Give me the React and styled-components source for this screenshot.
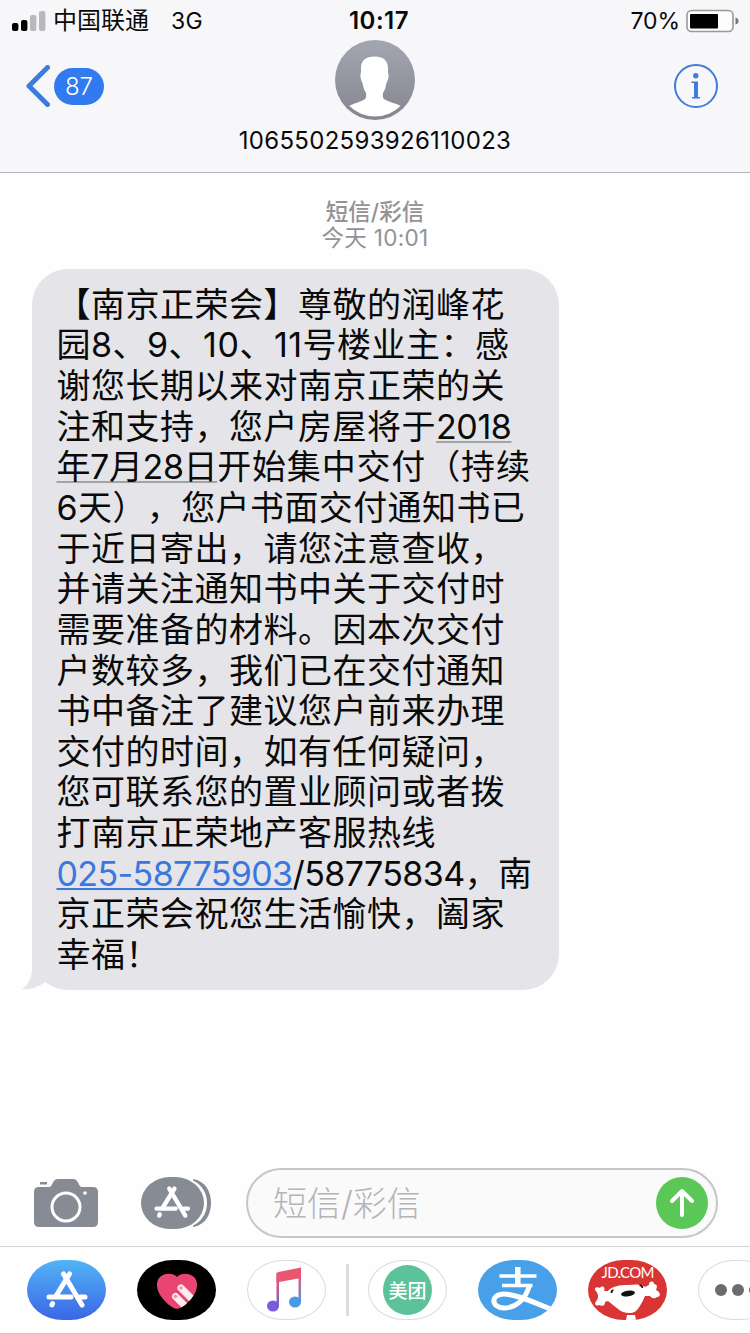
import React from "react";
import styled, { createGlobalStyle } from "styled-components";

const GlobalStyle = createGlobalStyle`
* {
  box-sizing: border-box;
}
body {
  margin: 0;
  background: #fff;
  font-family: Inter, "Noto Sans CJK SC", sans-serif;
  text-spacing-trim: space-all;
}
`
const Screen = styled.div`
display: flex;
flex-direction: column;
width: 750px;
height: 1334px;
overflow: hidden;
background: #fefefe;
`
const Header = styled.header`
height: 173px;
background: #f7f7f9;
border-bottom: 1px solid #b2b2b5;
`
const StatusBar = styled.div`
display: grid;
grid-template-columns: 1fr auto 1fr;
align-items: center;
height: 40px;
padding: 1px 11px 0 12px;
font-size: 23px;
color: #0a0a0a;
`
const StatusSide = styled.div`
display: flex;
align-items: center;
justify-content: ${(props) => (props.$end ? "flex-end" : "flex-start")};
`
const Carrier = styled.span`
margin-left: 7px;
padding-top: 1px;
font-size: 24px;
line-height: 30px;
`
const Network = styled.span`
margin-left: 22px;
letter-spacing: 0.3px;
`
const Clock = styled.span`
margin-left: 7px;
font-size: 24px;
font-weight: 600;
letter-spacing: 0.5px;
`
const Percent = styled.span`
margin-right: 6px;
letter-spacing: -0.1px;
`
const NavBar = styled.div`
display: grid;
grid-template-columns: 1fr auto 1fr;
`
const Back = styled.div`
display: flex;
align-items: center;
height: 42px;
margin: 25px 0 0 25px;
`
const Badge = styled.span`
display: flex;
align-items: center;
justify-content: center;
width: 50px;
height: 37px;
margin-left: 4px;
border-radius: 19px;
background: #327af0;
color: #fff;
font-size: 24px;
font-weight: 300;
`
const Contact = styled.div`
display: flex;
flex-direction: column;
align-items: center;
`
const Number = styled.span`
margin-top: 6px;
font-size: 24px;
line-height: 30px;
letter-spacing: 0.3px;
color: #0a0a0a;
`
const Info = styled.div`
justify-self: end;
margin: 24px 32px 0 0;
`
const Thread = styled.main`
flex: 1;
padding-top: 26px;
`
const Meta = styled.div`
display: flex;
flex-direction: column;
align-items: center;
font-size: 22.5px;
line-height: 26px;
color: #929297;
`
const MetaKind = styled.span`
font-weight: 500;
`
const MetaTime = styled.span`
letter-spacing: 0.3px;
`
const Bubble = styled.div`
position: relative;
width: 527px;
height: 721px;
margin: 18px 0 0 32px;
padding: 15.8px 0 0 24.5px;
border-radius: 36px;
background: #e5e4e8;
`
const Tail = styled.svg`
position: absolute;
left: -11px;
bottom: 0;
`
const Line = styled.div`
height: 40.65px;
font-size: 34px;
line-height: 40.65px;
letter-spacing: ${(props) => props.$spacing || 0.5}px;
white-space: nowrap;
color: #0a0a0a;
`
const DateMark = styled.span`
letter-spacing: -0.4px;
text-decoration: underline;
text-decoration-color: #a3a3a6;
text-decoration-thickness: 2px;
text-decoration-skip-ink: none;
text-underline-offset: 2px;
`
const Phone = styled.a`
color: #3a78e0;
text-decoration: underline;
text-decoration-thickness: 2px;
text-decoration-skip-ink: none;
text-underline-offset: 2px;
`
const Composer = styled.div`
display: flex;
align-items: center;
height: 78px;
padding: 0 32px 8px 33px;
`
const AppsButton = styled.div`
display: flex;
margin: 0 35px 0 42px;
`
const Field = styled.div`
display: flex;
align-items: center;
justify-content: space-between;
flex: 1;
height: 70px;
padding: 0 8px 0 25px;
border: 2px solid #c5c5ca;
border-radius: 35px;
background: #fafafb;
`
const Placeholder = styled.span`
padding-top: 2px;
font-size: 34px;
font-weight: 300;
line-height: 40px;
color: #b4b4b9;
`
const Strip = styled.div`
display: flex;
height: 88px;
padding: 13px 0 0 27px;
border-top: 1px solid #d2d1d8;
border-bottom: 1px solid #c9c9ce;
`
const AppTile = styled.div`
display: flex;
flex-shrink: 0;
align-items: center;
justify-content: center;
width: 79px;
height: 60px;
margin-right: 31px;
overflow: hidden;
border: ${(props) => (props.$plain ? "1px solid #dcdce0" : "none")};
border-radius: 36px / 30px;
background: ${(props) => props.$bg || "#fff"};

svg {
  flex-shrink: 0;
}
`
const Separator = styled.div`
flex-shrink: 0;
width: 3px;
height: 52px;
margin: 4px 19px 0 -11px;
background: #dcdce0;
`
const Meituan = styled.div`
display: flex;
align-items: center;
justify-content: center;
width: 49px;
height: 50px;
padding-top: 3px;
border-radius: 50%;
background: #5cc29a;
color: #fff;
font-size: 19px;
font-weight: 500;
line-height: 20px;
`

const bars = [
    { height: 8, color: "#000" },
    { height: 11, color: "#000" },
    { height: 16, color: "#b9b9bb" },
    { height: 20, color: "#b9b9bb" },
]

function Signal(){
    return(
        <svg width="34" height="20">
            {bars.map((bar, i) => (
                <rect key={i} x={i * 9} y={20 - bar.height} width="6.4" height={bar.height} rx="2" fill={bar.color}/>
            ))}
        </svg>
    )
}

function Battery(){
    return(
        <svg width="53" height="24" viewBox="0 0 53 24">
            <rect x="1" y="1.5" width="46" height="21" rx="4.5" fill="#fdfdfd" stroke="#98989b" strokeWidth="1.6"/>
            <rect x="4" y="5" width="28" height="14.5" rx="1" fill="#000"/>
            <path d="M49.5 8.5Q52.5 9.5 52.5 12T49.5 15.5Z" fill="#77777a"/>
        </svg>
    )
}

function Avatar(){
    return(
        <svg width="80" height="80" viewBox="0 0 80 80">
            <defs>
                <linearGradient id="avatar" x1="0" y1="0" x2="0" y2="1">
                    <stop offset="0" stopColor="#a3a6b2"/>
                    <stop offset="1" stopColor="#85868e"/>
                </linearGradient>
                <clipPath id="face">
                    <circle cx="40" cy="40" r="36.5"/>
                </clipPath>
            </defs>
            <circle cx="40" cy="40" r="40" fill="url(#avatar)"/>
            <path clipPath="url(#face)" fill="#fff" d="M39.500 16.500C30 16.500 25.500 21 26 30C26.200 33 25.200 34 25.500 37C26 41 27.500 42 28 45C28.500 49 30 51 31 53C31.500 56 31 58 30 59C26 62 19 63 12 67V80H68V67C61 63 53 62 49 59C48 58 47.500 56 48 53C49 51 50.500 49 51 45C51.500 42 53 41 53.500 37C53.800 34 52.800 33 53 30C53.500 21 49 16.500 39.500 16.500Z"/>
        </svg>
    )
}

function InfoIcon(){
    return(
        <svg width="44" height="44" viewBox="0 0 44 44" fill="#3f7bdc">
            <circle cx="22" cy="22" r="21" fill="none" stroke="#3f7bdc" strokeWidth="2"/>
            <circle cx="21.800" cy="11.800" r="2.700"/>
            <path d="M17.500 17.500H24V33H26V34.500H18V33H20V19H17.500Z"/>
        </svg>
    )
}

function Camera(){
    return(
        <svg width="66" height="50" viewBox="0 0 66 50">
            <rect x="7" y="4" width="7" height="2.500" fill="#878b94"/>
            <path fill="#878b94" d="M6 9H16C20 9 19 1 25 1H40C46 1 45 9 49 9H60Q65 9 65 14V44Q65 49 60 49H6Q1 49 1 44V14Q1 9 6 9Z"/>
            <circle cx="33" cy="29" r="14" fill="none" stroke="#fff" strokeWidth="3"/>
            <circle cx="52" cy="15" r="1.800" fill="#fff"/>
        </svg>
    )
}

function StoreMark(){
    return(
        <g fill="none" stroke="#fff" strokeWidth="5" strokeLinecap="round">
            <path d="M23.500 3L10 25M17.500 3L36 34"/>
            <path d="M3 26H25M34 26H39"/>
            <path d="M6.500 32.500L6 34"/>
        </g>
    )
}

function AppsIcon(){
    return(
        <svg width="70" height="52" viewBox="0 0 70 52">
            <path fill="#878b94" d="M52 2C64 4 70 14 70 26S64 48 52 50Z"/>
            <path fill="#fefefe" d="M38 0C56 1 66 12 66 26S56 51 38 52Z"/>
            <rect width="63" height="52" rx="29" ry="26" fill="#878b94"/>
            <g transform="translate(13 9) scale(.87)"><StoreMark/></g>
        </svg>
    )
}

function Music(){
    return(
        <svg width="79" height="60" viewBox="0 0 79 60">
            <defs>
                <linearGradient id="stem" x1="0" y1="0" x2="0" y2="1">
                    <stop offset="0.2" stopColor="#ea5673"/>
                    <stop offset="1" stopColor="#6c63df"/>
                </linearGradient>
                <linearGradient id="stem2" x1="0" y1="0" x2="0" y2="1">
                    <stop offset="0.2" stopColor="#ea5673"/>
                    <stop offset="1" stopColor="#4b98e4"/>
                </linearGradient>
            </defs>
            <path d="M29.500 13H32V46H29.500Z" fill="url(#stem)"/>
            <path d="M51.500 8H54V42H51.500Z" fill="url(#stem2)"/>
            <path d="M29.500 14Q29.500 12.500 31.500 12L54 7.500V18L29.500 22.500Z" fill="#e9566f"/>
            <ellipse cx="26" cy="46" rx="6" ry="5.500" fill="#7a5be0"/>
            <ellipse cx="48" cy="42" rx="6" ry="5.500" fill="#4799e4"/>
        </svg>
    )
}

function Heart(){
    return(
        <svg width="42" height="38" viewBox="0 0 42 38">
            <defs>
                <clipPath id="heart">
                    <path d="M21 6C17 1 7 2 3 7C-1 13 1 21 7 28Q14 36 19 37.500Q21 38 23 37.500Q28 36 35 28C41 21 43 13 39 7C35 2 25 1 21 6Z"/>
                </clipPath>
            </defs>
            <g clipPath="url(#heart)">
                <rect width="42" height="38" fill="#ea4570"/>
                <g stroke="#f8edf1" strokeWidth="7" strokeLinecap="round">
                    <path d="M25 17L42 34"/>
                    <path d="M19.500 25.500L34 40"/>
                </g>
                <circle cx="25" cy="17" r="1.800" fill="#f091ab"/>
                <circle cx="19.500" cy="25.500" r="1.800" fill="#f091ab"/>
            </g>
        </svg>
    )
}

function Alipay(){
    return(
        <svg width="79" height="60" viewBox="0 0 79 60" fill="none" stroke="#fff">
            <path strokeWidth="3.500" d="M21.500 16H58.500M24 25.500H54.500"/>
            <path strokeWidth="5.500" d="M39.800 7V26"/>
            <path strokeWidth="5" d="M51.500 25C48 39 38 48 26 48C13 48 12 34 26 34C38 34 57 43 78 51"/>
        </svg>
    )
}

function JdDog(){
    return(
        <svg width="79" height="60" viewBox="0 0 79 60">
            <text x="40" y="17.500" textAnchor="middle" textLength="53" fontFamily="Lato, sans-serif" fontSize="15" fill="#fff">JD.COM</text>
            <path fill="#fff" d="M20 31C24 26 32 25 40 25C48 24 54 24 57 27L61 25C60 21 66 20 66 24C70 24 69 28 68 30C73 32 73 37 69 37C66 40 63 37 62 36L57 36C54 43 51 48 48 51C45 54 35 54 30 49C26 46 23 43 20 41L17 42C17 47 13 46 11 45C7 47 6 43 9 40C11 37 10 34 8 31C5 28 9 26 12 28C14 25 18 27 16 31Z"/>
            <path fill="#fff" d="M39 55H47L48 60H38Z"/>
            <ellipse cx="40" cy="33.500" rx="7" ry="2.800" transform="rotate(-8 40 33.500)" fill="#111"/>
            <path d="M23.500 33Q23.500 30 25.500 30.500M51.500 25.500Q54 25 54.500 28" stroke="#111" strokeWidth="1.800" fill="none"/>
        </svg>
    )
}

export default function App(){
    return(
        <Screen>
            <GlobalStyle/>
            <Header>
                <StatusBar>
                    <StatusSide>
                        <Signal/>
                        <Carrier>中国联通</Carrier>
                        <Network>3G</Network>
                    </StatusSide>
                    <Clock>10:17</Clock>
                    <StatusSide $end>
                        <Percent>70%</Percent>
                        <Battery/>
                    </StatusSide>
                </StatusBar>
                <NavBar>
                    <Back>
                        <svg width="25" height="42" viewBox="0 0 25 42" fill="none" stroke="#3f7bdc" strokeWidth="5" strokeLinecap="round" strokeLinejoin="round">
                            <path d="M22.500 2.500L4 21L22.500 39.500"/>
                        </svg>
                        <Badge>87</Badge>
                    </Back>
                    <Contact>
                        <Avatar/>
                        <Number>1065502593926110023</Number>
                    </Contact>
                    <Info><InfoIcon/></Info>
                </NavBar>
            </Header>
            <Thread>
                <Meta>
                    <MetaKind>短信/彩信</MetaKind>
                    <MetaTime>今天 10:01</MetaTime>
                </Meta>
                <Bubble>
                    <Tail width="26" height="46" viewBox="0 0 26 46">
                        <path fill="#e5e4e8" d="M11 0V28Q9 40 1 45.500Q14 45.500 24.500 38V0Z"/>
                    </Tail>
                    <Line>【南京正荣会】尊敬的润峰花</Line>
                    <Line>园8、9、10、11号楼业主：感</Line>
                    <Line>谢您长期以来对南京正荣的关</Line>
                    <Line>注和支持，您户房屋将于<DateMark>2018</DateMark></Line>
                    <Line $spacing={0.85}><DateMark>年7月28日</DateMark>开始集中交付（持续</Line>
                    <Line $spacing={0.4}>6天），您户书面交付通知书已</Line>
                    <Line>于近日寄出，请您注意查收，</Line>
                    <Line>并请关注通知书中关于交付时</Line>
                    <Line>需要准备的材料。因本次交付</Line>
                    <Line>户数较多，我们已在交付通知</Line>
                    <Line>书中备注了建议您户前来办理</Line>
                    <Line>交付的时间，如有任何疑问，</Line>
                    <Line>您可联系您的置业顾问或者拨</Line>
                    <Line>打南京正荣地产客服热线</Line>
                    <Line $spacing={-0.6}><Phone>025-58775903</Phone>/58775834，南</Line>
                    <Line>京正荣会祝您生活愉快，阖家</Line>
                    <Line>幸福！</Line>
                </Bubble>
            </Thread>
            <Composer>
                <Camera/>
                <AppsButton><AppsIcon/></AppsButton>
                <Field>
                    <Placeholder>短信/彩信</Placeholder>
                    <svg width="52" height="52" viewBox="0 0 52 52">
                        <circle cx="26" cy="26" r="26" fill="#5ac756"/>
                        <path d="M26 38V14M16 24L26 14L36 24" fill="none" stroke="#fff" strokeWidth="4" strokeLinecap="round" strokeLinejoin="round"/>
                    </svg>
                </Field>
            </Composer>
            <Strip>
                <AppTile $bg="linear-gradient(#52b4f6, #3b66e6)">
                    <svg width="42" height="38" viewBox="0 0 42 38"><StoreMark/></svg>
                </AppTile>
                <AppTile $bg="#000"><Heart/></AppTile>
                <AppTile $plain><Music/></AppTile>
                <Separator/>
                <AppTile $plain><Meituan>美团</Meituan></AppTile>
                <AppTile $bg="#47a0e8"><Alipay/></AppTile>
                <AppTile $bg="#da3535"><JdDog/></AppTile>
                <AppTile $plain>
                    <svg width="46" height="12" fill="#6b6b70">
                        <circle cx="6" cy="6" r="6"/>
                        <circle cx="23" cy="6" r="6"/>
                        <circle cx="40" cy="6" r="6"/>
                    </svg>
                </AppTile>
            </Strip>
        </Screen>
    )
}
